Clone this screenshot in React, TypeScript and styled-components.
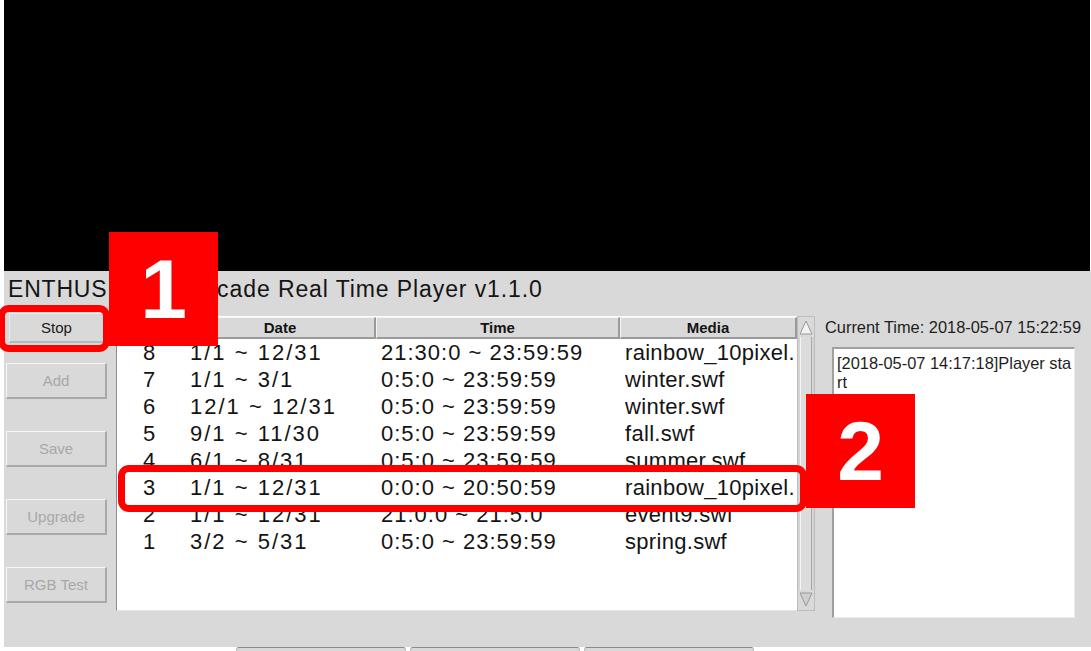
import React from "react";
import styled, { createGlobalStyle } from "styled-components";

const GlobalStyle = createGlobalStyle`
  html, body {
    margin: 0;
    padding: 0;
    background: #ffffff;
  }
  body {
    font-family: "Liberation Sans", Arial, sans-serif;
    color: #141414;
  }
`;

const schedules = [
  { id: 8, date: "1/1 ~ 12/31", time: "21:30:0 ~ 23:59:59", media: "rainbow_10pixel.swf" },
  { id: 7, date: "1/1 ~ 3/1", time: "0:5:0 ~ 23:59:59", media: "winter.swf" },
  { id: 6, date: "12/1 ~ 12/31", time: "0:5:0 ~ 23:59:59", media: "winter.swf" },
  { id: 5, date: "9/1 ~ 11/30", time: "0:5:0 ~ 23:59:59", media: "fall.swf" },
  { id: 4, date: "6/1 ~ 8/31", time: "0:5:0 ~ 23:59:59", media: "summer.swf" },
  { id: 3, date: "1/1 ~ 12/31", time: "0:0:0 ~ 20:50:59", media: "rainbow_10pixel.swf" },
  { id: 2, date: "1/1 ~ 12/31", time: "21:0:0 ~ 21:5:0", media: "event9.swf" },
  { id: 1, date: "3/2 ~ 5/31", time: "0:5:0 ~ 23:59:59", media: "spring.swf" },
];

const sideButtons = ["Add", "Save", "Upgrade", "RGB Test"];

const App = () => {
  return (
    <Frame>
      <GlobalStyle />
      <Screen />
      <Panel>
        <Title>
          <Brand>ENTHUSIASTIC</Brand> Arcade Real Time Player v1.1.0
        </Title>
        <Body>
          <Side>
            <StopButton>Stop</StopButton>
            {sideButtons.map((b) => (
              <SideButton key={b} disabled>
                {b}
              </SideButton>
            ))}
          </Side>
          <Table>
            <HeaderRow>
              <HeaderCell>No.</HeaderCell>
              <HeaderCell>Date</HeaderCell>
              <HeaderCell>Time</HeaderCell>
              <HeaderCell>Media</HeaderCell>
            </HeaderRow>
            {schedules.map((s) => (
              <Row key={s.id}>
                <NumCell>{s.id}</NumCell>
                <Cell $spacing={2}>{s.date}</Cell>
                <Cell $spacing={1}>{s.time}</Cell>
                <Cell $spacing={0.3}>
                  <Clip>{s.media}</Clip>
                </Cell>
              </Row>
            ))}
          </Table>
          <Scrollbar>
            <ArrowButton>
              <svg width="16" height="18" viewBox="0 0 16 18">
                <polygon points="8,3 14,16 2,16" fill="#f2f2f2" stroke="#9a9a9a" strokeWidth="1" />
              </svg>
            </ArrowButton>
            <Track />
            <ArrowButton>
              <svg width="16" height="18" viewBox="0 0 16 18">
                <polygon points="2,2 14,2 8,15" fill="#cfcfcf" stroke="#9a9a9a" strokeWidth="1" />
              </svg>
            </ArrowButton>
          </Scrollbar>
          <Info>
            <Clock>Current Time: 2018-05-07 15:22:59</Clock>
            <Log>[2018-05-07 14:17:18]Player start</Log>
          </Info>
        </Body>
      </Panel>
      <Tabs>
        <Tab />
        <Tab />
        <Tab />
      </Tabs>

      <Outline style={{ left: -2, top: 305, width: 112, height: 47 }} />
      <Outline style={{ left: 118, top: 465, width: 689, height: 47 }} />
      <Marker style={{ left: 109, top: 232 }}>1</Marker>
      <Marker style={{ left: 806, top: 394 }}>2</Marker>
    </Frame>
  );
};

export default App;

const Frame = styled.div`
  position: relative;
  width: 1091px;
  height: 651px;
  padding-left: 4px;
  box-sizing: border-box;
  overflow: hidden;
  background: #ffffff;
  display: flex;
  flex-direction: column;
`;

const Screen = styled.div`
  height: 271px;
  margin-right: 1px;
  background: #000000;
  flex: none;
`;

const Panel = styled.div`
  height: 376px;
  flex: none;
  background: #d9d9d9;
  display: flex;
  flex-direction: column;
`;

const Title = styled.div`
  height: 41px;
  line-height: 36px;
  padding-left: 4px;
  font-size: 23px;
  letter-spacing: 0.9px;
  color: #141414;
  white-space: nowrap;
`;

const Brand = styled.span`
  letter-spacing: 0.8px;
`;

const Body = styled.div`
  display: flex;
  align-items: flex-start;
`;

const Side = styled.div`
  width: 112px;
  display: flex;
  flex-direction: column;
  align-items: flex-start;
  gap: 32px;
`;

const buttonBase = `
  font-family: "Liberation Sans", Arial, sans-serif;
  font-size: 15px;
  background: #d9d9d9;
  box-sizing: border-box;
  padding: 0;
  border-style: solid;
  border-width: 1px 2px 2px 1px;
  border-color: #f6f6f6 #a9a9a9 #a9a9a9 #f6f6f6;
`;

const StopButton = styled.button`
  ${buttonBase}
  width: 96px;
  height: 30px;
  margin: 1px 0 -12px 5px;
  color: #1a1a1a;
  border-color: #ececec #b8b8b8 #b8b8b8 #ececec;
`;

const SideButton = styled.button`
  ${buttonBase}
  width: 101px;
  height: 36px;
  margin-left: 2px;
  color: #a8a8a8;
`;

const Table = styled.div`
  margin-top: 4px;
  width: 681px;
  height: 295px;
  box-sizing: border-box;
  background: #ffffff;
  border-left: 1px solid #8c8c8c;
  border-bottom: 1px solid #e6e6e6;
`;

const columns = "68px 191px 244px 177px";

const HeaderRow = styled.div`
  display: grid;
  grid-template-columns: ${columns};
  height: 22px;
  margin-top: 1px;
  background: #d9d9d9;
`;

const HeaderCell = styled.div`
  box-sizing: border-box;
  border-style: solid;
  border-width: 1px 2px 2px 1px;
  border-color: #f4f4f4 #9a9a9a #9a9a9a #f4f4f4;
  font-weight: bold;
  font-size: 15px;
  line-height: 19px;
  text-align: center;
  color: #141414;
`;

const Row = styled.div`
  display: grid;
  grid-template-columns: ${columns};
  height: 27px;
  line-height: 27px;
  font-size: 22px;
  color: #141414;
  &:first-of-type {
    margin-top: 1px;
  }
`;

const Cell = styled.div<{ $spacing?: number }>`
  padding-left: 5px;
  letter-spacing: ${(p) => p.$spacing ?? 0}px;
  white-space: nowrap;
  overflow: hidden;
`;

const NumCell = styled(Cell)`
  padding-left: 26px;
`;

const Clip = styled.span`
  display: inline-block;
  width: 170px;
  overflow: hidden;
  vertical-align: top;
`;

const Scrollbar = styled.div`
  margin-top: 4px;
  width: 18px;
  height: 295px;
  box-sizing: border-box;
  border: 1px solid #bdbdbd;
  background: #d4d4d4;
  display: flex;
  flex-direction: column;
`;

const ArrowButton = styled.div`
  height: 20px;
  flex: none;
  display: flex;
  align-items: center;
  justify-content: center;
  background: #d9d9d9;
`;

const Track = styled.div`
  flex: 1;
  margin: 0 2px;
  background: #dcdcdc;
  border-left: 1px solid #f4f4f4;
  border-right: 1px solid #a8a8a8;
`;

const Info = styled.div`
  flex: 1;
  display: flex;
  flex-direction: column;
  padding-left: 10px;
`;

const Clock = styled.div`
  margin-top: 6px;
  height: 29px;
  line-height: 18px;
  font-size: 16.4px;
  color: #1e1e1e;
  white-space: nowrap;
`;

const Log = styled.div`
  margin-left: 7px;
  width: 243px;
  height: 271px;
  box-sizing: border-box;
  padding: 5px 2px 0 3px;
  background: #ffffff;
  border-style: solid;
  border-width: 2px 1px 1px 2px;
  border-color: #a0a0a0 #eeeeee #eeeeee #a0a0a0;
  font-size: 16.4px;
  line-height: 19px;
  color: #1e1e1e;
  word-break: break-all;
`;

const Tabs = styled.div`
  display: flex;
  gap: 4px;
  padding-left: 232px;
  height: 4px;
`;

const Tab = styled.div`
  width: 168px;
  height: 4px;
  background: #d9d9d9;
  border-top: 1px solid #8a8a8a;
  border-left: 1px solid #bdbdbd;
  border-right: 1px solid #bdbdbd;
  border-radius: 3px 3px 0 0;
`;

const Outline = styled.div`
  position: absolute;
  box-sizing: border-box;
  border: 7px solid #ff0000;
  border-radius: 11px;
`;

const Marker = styled.div`
  position: absolute;
  width: 109px;
  height: 114px;
  background: #ff0000;
  color: #ffffff;
  font-family: "Liberation Sans", Arial, sans-serif;
  font-weight: bold;
  font-size: 84px;
  line-height: 114px;
  text-align: center;
`;
